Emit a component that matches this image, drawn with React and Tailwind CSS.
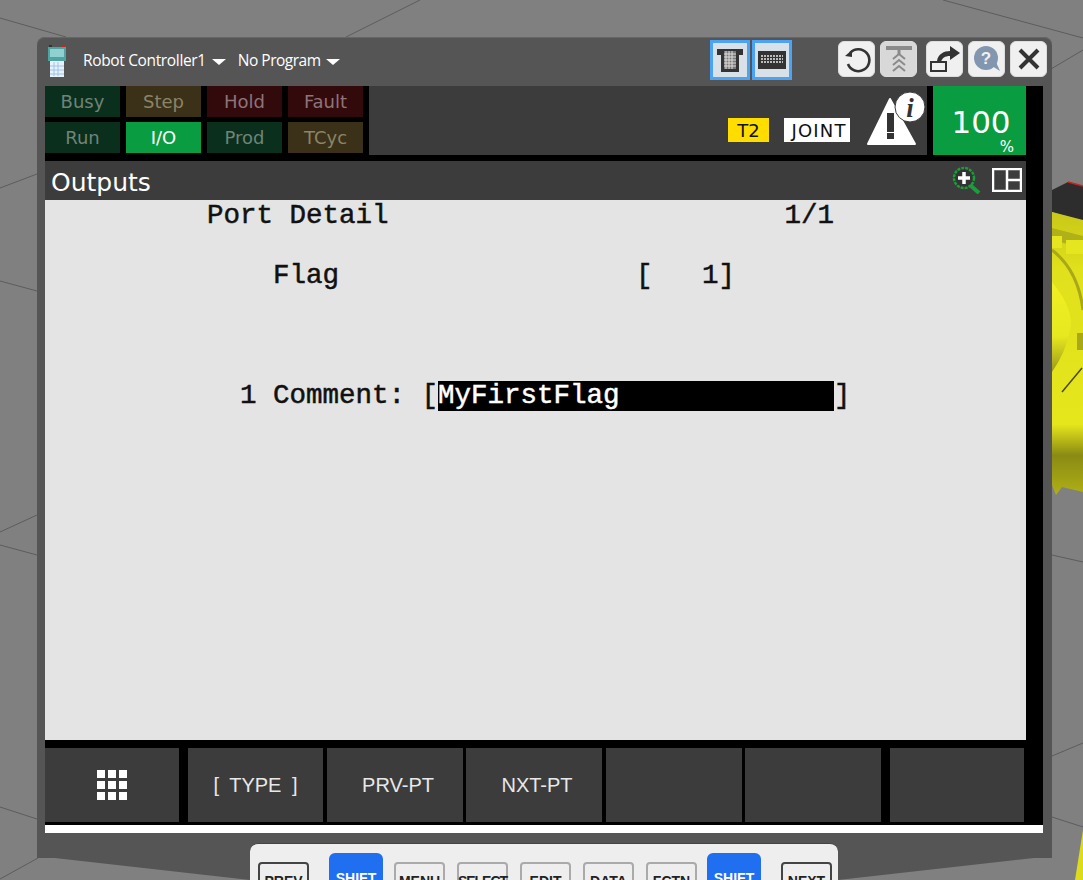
const mono = { fontFamily: '"Liberation Mono", monospace' };

const leds = [
  ['Busy', 'bg-[#0b2f1d] text-[#6f8478]'],
  ['Step', 'bg-[#3b3118] text-[#8a8468]'],
  ['Hold', 'bg-[#330a0c] text-[#8e7478]'],
  ['Fault', 'bg-[#330a0c] text-[#8e7478]'],
  ['Run', 'bg-[#0b2f1d] text-[#6f8478]'],
  ['I/O', 'bg-[#0a9c40] text-white'],
  ['Prod', 'bg-[#0b2f1d] text-[#6f8478]'],
  ['TCyc', 'bg-[#3b3118] text-[#8a8468]'],
];

const softKeys = [
  ['', 'w-[134px]'],
  ['[ TYPE ]', 'w-[135px] ml-[9px]'],
  ['PRV-PT', 'w-[136px] ml-[4px] pl-[6px]'],
  ['NXT-PT', 'w-[136px] ml-[3px] pl-[6px]'],
  ['', 'w-[136px] ml-[4px]'],
  ['', 'w-[136px] ml-[3px]'],
  ['', 'w-[134px] ml-[9px]'],
];

const hardKeys = [
  ['PREV', 'w-[51px] border-[#444] mt-[18px] pt-[10px] text-[#222]'],
  ['SHIFT', 'w-[54px] ml-[20px] mt-[9px] pt-[16px] bg-[#1f6ff0] border-[#1f6ff0] text-white rounded-t-md'],
  ['MENU', 'w-[51px] ml-[11px] mt-[18px] pt-[10px] border-[#aaa] text-[#222]'],
  ['SELECT', 'w-[51px] ml-[12px] mt-[18px] pt-[10px] border-[#aaa] text-[#222] tracking-[-1px]'],
  ['EDIT', 'w-[51px] ml-[12px] mt-[18px] pt-[10px] border-[#aaa] text-[#222]'],
  ['DATA', 'w-[51px] ml-[12px] mt-[18px] pt-[10px] border-[#aaa] text-[#222]'],
  ['FCTN', 'w-[51px] ml-[12px] mt-[18px] pt-[10px] border-[#aaa] text-[#222]'],
  ['SHIFT', 'w-[54px] ml-[10px] mt-[9px] pt-[16px] bg-[#1f6ff0] border-[#1f6ff0] text-white rounded-t-md'],
  ['NEXT', 'w-[51px] ml-[20px] mt-[18px] pt-[10px] border-[#444] text-[#222]'],
];

function Scene() {
  return (
    <svg className="absolute inset-0" width="1083" height="880" viewBox="0 0 1083 880">
      <g stroke="#5c5c5c" strokeWidth="1" fill="none">
        <path d="M0 18 L66 37" />
        <path d="M346 37 L420 0" />
        <path d="M943 0 L1083 38" />
        <path d="M1051 69 L1083 50" />
        <path d="M0 188 L37 174" />
        <path d="M0 281 L37 291" />
        <path d="M0 532 L37 515" />
        <path d="M0 545 L37 555" />
        <path d="M0 807 L37 819" />
        <path d="M0 879 L38 858" />
        <path d="M1052 555 L1083 562" />
        <path d="M1052 756 L1083 743" />
        <path d="M1052 817 L1083 827" />
      </g>
      {/* lower edge of the pendant body */}
      <path d="M37 845 L1052 845 L1052 856 L838 880 L250 880 L37 856 Z" fill="#555555" />

      {/* robot behind the pendant */}
      <path d="M1052 190 L1068 182 L1083 186 L1083 221 L1052 212 Z" fill="#2d2d2d" />
      <path d="M1068 182 L1083 186" stroke="#c22" strokeWidth="1.5" />
      <defs>
        <linearGradient id="yel" x1="0" y1="0" x2="0" y2="1">
          <stop offset="0" stopColor="#c8c818" />
          <stop offset="0.2" stopColor="#e0e01c" />
          <stop offset="0.75" stopColor="#e6e61c" />
          <stop offset="0.86" stopColor="#8a8a14" />
          <stop offset="1" stopColor="#b0b016" />
        </linearGradient>
        <linearGradient id="disc" x1="0" y1="0" x2="0" y2="1">
          <stop offset="0" stopColor="#f0f024" />
          <stop offset="0.6" stopColor="#e8e820" />
          <stop offset="1" stopColor="#9a9a18" />
        </linearGradient>
      </defs>
      <path d="M1052 212 L1083 220 L1083 492 L1062 487 L1056 495 L1052 485 Z" fill="url(#yel)" />
      <path d="M1052 228 L1083 236 L1083 248 L1052 240 Z" fill="#b0b018" />
      <path d="M1052 236 h10 v12 h-10 z M1066 240 h17 v14 h-17 z" fill="#e6e620" />
      <path d="M1052 250 Q1078 270 1083 310" stroke="#a8a818" strokeWidth="3" fill="none" />
      <path d="M1052 282 Q1075 310 1070 330 Q1066 352 1052 372 Z" fill="url(#disc)" />
      <rect x="1077" y="333" width="6" height="17" fill="#a8a818" />
      <path d="M1062 392 L1082 368" stroke="#4a4a10" strokeWidth="1.5" fill="none" />
      <path d="M1083 830 L1083 880 L1075 880 Z" fill="#dcdc1c" />
    </svg>
  );
}

function PendantIcon() {
  return (
    <svg width="20" height="32" viewBox="0 0 20 32">
      <rect x="2" y="0" width="3" height="2" fill="#333" />
      <rect x="15" y="0" width="3" height="2" fill="#c22" />
      <rect x="1" y="2" width="18" height="14" fill="#4fa3a0" />
      <rect x="3" y="4" width="14" height="8" fill="#8fd0d0" />
      <rect x="3" y="16" width="14" height="16" fill="#e8f2fa" />
      <path d="M7 17v14M11 17v14M3 21h14M3 25h14M3 29h14" stroke="#9cc4e8" strokeWidth="1" />
    </svg>
  );
}

function Caret() {
  return <span className="inline-block w-0 h-0 border-x-[7px] border-x-transparent border-t-[6px] border-t-white" />;
}

function ToolBtn({ children }) {
  return <div className="w-[37px] h-[36px] rounded-md bg-[#f0f0f0] border border-[#ddd] flex items-center justify-center">{children}</div>;
}

function BlueBtn({ children }) {
  return <div className="w-[40px] h-[40px] bg-[#d8e0e8] border-[3px] border-[#4aa3f5] flex items-center justify-center">{children}</div>;
}

export default function App() {
  return (
    <div className="relative w-[1083px] h-[880px] overflow-hidden bg-[#808080]">
      <Scene />

      {/* pendant window */}
      <div className="absolute left-[37px] top-[37px] w-[1015px] h-[821px] bg-[#555555] rounded-t-lg shadow-[inset_0_1px_0_#666] pl-[8px] pr-[9px] flex flex-col">
        <div className="h-[49px] flex items-center text-white" style={{ fontFamily: '"Open Sans", sans-serif' }}>
          <div className="ml-[2px] mb-[2px]"><PendantIcon /></div>
          <span className="ml-[16px] mb-[2px] text-[15.5px] tracking-[-0.35px]">Robot Controller1</span>
          <span className="ml-[6px] flex"><Caret /></span>
          <span className="ml-[12px] mb-[2px] text-[15.5px] tracking-[-0.5px]">No Program</span>
          <span className="ml-[5px] flex"><Caret /></span>
          <div className="ml-auto flex gap-[2px] mt-[-3px]">
            <BlueBtn>
              <svg width="28" height="28" viewBox="0 0 28 28">
                <path d="M1 3h26v6h-4v17H5V9H1z" fill="#333" />
                <rect x="8" y="5" width="12" height="18" fill="#777" />
                <path d="M10 5v18M13 5v18M16 5v18M8 8h12M8 11h12M8 14h12M8 17h12M8 20h12" stroke="#ddd" strokeWidth="1" />
              </svg>
            </BlueBtn>
            <BlueBtn>
              <svg width="28" height="18" viewBox="0 0 28 18">
                <rect width="28" height="18" fill="#333" />
                <path d="M3 5h22M3 8h22M3 11h22" stroke="#bbb" strokeWidth="2" strokeDasharray="2 1" />
              </svg>
            </BlueBtn>
          </div>
          <div className="ml-[46px] mr-[-4px] mt-[-5px] flex items-center gap-[5px]">
            <ToolBtn>
              <svg width="30" height="30" viewBox="0 0 30 30" fill="none" stroke="#333" strokeWidth="2.6">
                <path d="M8 9 A11 11 0 1 1 6 20" />
                <path d="M3 12 L10 13 L10 6 Z" fill="#333" stroke="none" />
              </svg>
            </ToolBtn>
            <div className="w-[37px] h-[36px] rounded-md bg-[#d8d8d8] border border-[#ddd] flex items-center justify-center">
              <svg width="26" height="30" viewBox="0 0 26 30" fill="none" stroke="#8a8a8a" strokeWidth="2">
                <path d="M0 4h26" strokeWidth="4" />
                <path d="M13 4v7" strokeWidth="3" />
                <path d="M7 15l6-5 6 5M7 21l6-5 6 5M7 27l6-5 6 5" />
              </svg>
            </div>
            <div className="ml-[4px] flex gap-[5px]">
              <ToolBtn>
                <svg width="32" height="28" viewBox="0 0 32 28" fill="none">
                  <path d="M2 17h15v9H2z" stroke="#333" strokeWidth="2" />
                  <path d="M8 16 C9 9 15 6 21 6 V1 L31 8 L21 15 V11 C16 11 13 13 12 17 Z" fill="#333" />
                </svg>
              </ToolBtn>
              <ToolBtn>
                <svg width="30" height="30" viewBox="0 0 30 30">
                  <circle cx="14" cy="14" r="12" fill="#8296b0" />
                  <path d="M20 22 L28 27 L24 18 Z" fill="#8296b0" />
                  <text x="14" y="20" textAnchor="middle" fontSize="17" fontWeight="700" fill="#f0f0f0" fontFamily="Liberation Sans">?</text>
                </svg>
              </ToolBtn>
              <ToolBtn>
                <svg width="24" height="24" viewBox="0 0 24 24" stroke="#333" strokeWidth="4">
                  <path d="M3 3 L21 21 M21 3 L3 21" />
                </svg>
              </ToolBtn>
            </div>
          </div>
        </div>

        <div className="flex-1 bg-black flex flex-col">
          {/* status row */}
          <div className="h-[69px] flex" style={{ fontFamily: '"DejaVu Sans", sans-serif' }}>
            <div className="w-[324px] grid grid-cols-4 gap-x-[6px] gap-y-[5px] pr-[6px] pb-[2px]">
              {leds.map(([label, cls]) => (
                <div key={label} className={`h-[31px] flex items-center justify-center text-[18px] ${cls}`}>{label}</div>
              ))}
            </div>
            <div className="w-[558px] bg-[#3c3c3c] relative">
              <div className="absolute left-[359px] top-[32px] w-[41px] h-[24px] bg-[#ffdd00] text-[#111] text-[18px] flex items-center justify-center">T2</div>
              <div className="absolute left-[415px] top-[32px] w-[66px] h-[24px] bg-white text-[#111] text-[18px] tracking-[1.2px] pl-[4px] flex items-center justify-center">JOINT</div>
              <svg className="absolute left-[497px] top-[3px]" width="62" height="60" viewBox="0 0 62 60">
                <path d="M24 10 L49 55 L2 55 Z" fill="#fff" stroke="#fff" strokeWidth="2" strokeLinejoin="round" />
                <rect x="21" y="24" width="7" height="19" fill="#333" />
                <rect x="21" y="44" width="7" height="6" fill="#333" />
                <circle cx="44" cy="18" r="15" fill="#fff" stroke="#3c3c3c" strokeWidth="1" />
                <text x="44" y="28" textAnchor="middle" fontSize="27" fontStyle="italic" fontWeight="700" fill="#333" fontFamily="Liberation Serif">i</text>
              </svg>
            </div>
            <div className="w-[6px]" />
            <div className="w-[93px] bg-[#0a9c40] text-white relative flex items-center justify-center">
              <span className="text-[31px] leading-none mt-[4px] ml-[3px]">100</span>
              <span className="absolute right-[12px] bottom-0 text-[15px] leading-none">%</span>
            </div>
          </div>
          <div className="h-[6px]" />

          {/* screen */}
          <div className="w-[981px] h-[39px] bg-[#3c3c3c] flex items-center text-white" style={{ fontFamily: '"DejaVu Sans", sans-serif' }}>
            <span className="ml-[6px] text-[25px] leading-none mt-[4px]">Outputs</span>
            <svg className="ml-auto mt-[-2px]" width="32" height="28" viewBox="0 0 32 28">
              <circle cx="13" cy="12" r="10" fill="#333" stroke="#1c9c3c" strokeWidth="2.5" strokeDasharray="3 1" />
              <path d="M19 19 L28 27" stroke="#1c9c3c" strokeWidth="4" />
              <path d="M13 6v12M7 12h12" stroke="#fff" strokeWidth="3.5" />
            </svg>
            <svg className="ml-[9px] mr-[4px] mt-[-2px]" width="30" height="24" viewBox="0 0 30 24" fill="none" stroke="#fff" strokeWidth="2.5">
              <path d="M1 1h28v22H1zM15 1v22M15 12h14" />
            </svg>
          </div>
          <div className="w-[981px] h-[540px] bg-[#e4e4e4] text-[#111] text-[27.5px] leading-[30px] pt-[1px] pl-[162px] [-webkit-text-stroke-width:0.5px]" style={mono}>
            <pre className="h-[30px] leading-[30px]" style={mono}>{'Port Detail                        1/1'}</pre>
            <div className="h-[30px]" />
            <pre className="h-[30px] leading-[30px]" style={mono}>{'    Flag                  [   1]'}</pre>
            <div className="h-[90px]" />
            <div className="h-[30px] flex">
              <pre className="leading-[30px]" style={mono}>{'  1 Comment: ['}</pre>
              <pre className="w-[396px] bg-black text-white leading-[30px]" style={mono}>MyFirstFlag</pre>
              <pre className="leading-[30px]" style={mono}>]</pre>
            </div>
          </div>

          {/* soft keys */}
          <div className="h-[8px]" />
          <div className="h-[74px] flex text-[#e8e8e8] text-[20px] [word-spacing:5px]" style={{ fontFamily: '"Liberation Sans", sans-serif' }}>
            {softKeys.map(([label, cls], i) => (
              <div key={i} className={`bg-[#3c3c3c] flex items-center justify-center ${cls}`}>
                {i === 0 ? (
                  <div className="grid grid-cols-3 gap-[3px]">
                    {Array.from({ length: 9 }).map((_, n) => <span key={n} className="w-[8px] h-[8px] bg-white" />)}
                  </div>
                ) : label}
              </div>
            ))}
          </div>
          <div className="h-[3px]" />
          <div className="h-[8px] bg-white" />
        </div>
        <div className="h-[25px]" />
      </div>

      {/* hard keys, cut off by the window edge */}
      <div className="absolute left-[250px] top-[843px] w-[588px] h-[50px] rounded-t-lg bg-[#eeeeee] border-t border-[#444] flex pl-[8px] overflow-hidden" style={{ fontFamily: '"Liberation Sans", sans-serif' }}>
        {hardKeys.map(([label, cls], i) => (
          <div key={i} className={`h-[42px] shrink-0 border-2 rounded-sm flex justify-center text-[14px] font-bold leading-none ${cls}`}>{label}</div>
        ))}
      </div>
    </div>
  );
}
